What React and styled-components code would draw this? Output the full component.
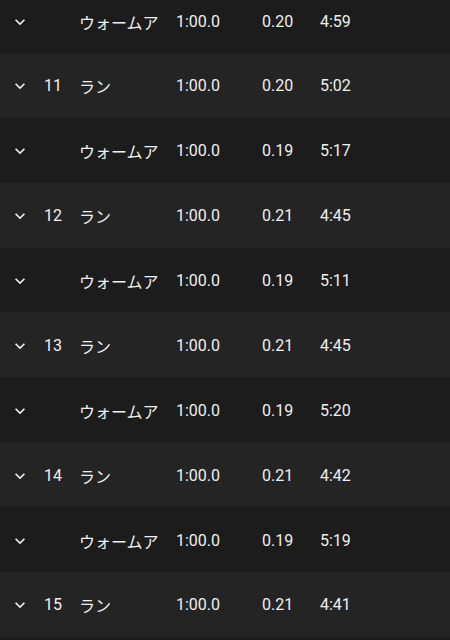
import React from "react";
import styled, { createGlobalStyle } from "styled-components";

const Global = createGlobalStyle`
  html, body { margin: 0; padding: 0; background: #1c1c1c; overflow: hidden; }
  body { font-family: Roboto, "Noto Sans CJK JP", sans-serif; }
`;

const List = styled.div`
  margin-top: -11.9px;
  display: flex;
  flex-direction: column;
`;

const Row = styled.div`
  box-sizing: border-box;
  height: 64.89px;
  display: grid;
  grid-template-columns: 20px 49px 97px 86px 58px 1fr;
  align-items: center;
  padding: 2px 0 0 10px;
  background: ${(p) => (p.$alt ? "#242424" : "#1c1c1c")};
  color: #efefef;
  font-size: 16px;
  line-height: 20px;
`;

const IconCell = styled.div`
  display: flex;
  align-items: center;
  width: 20px;
  height: 20px;
`;

const Num = styled.span`
  padding-left: 14px;
  font-family: Roboto, sans-serif;
`;

const Name = styled.span`
  font-family: "Noto Sans CJK JP", sans-serif;
`;

const Cell = styled.span`
  font-family: Roboto, sans-serif;
`;

const Chevron = () => (
  <svg width="20" height="20" viewBox="0 0 24 24" fill="#efefef">
    <path d="M7.41 8.59 12 13.17l4.59-4.58L18 10l-6 6-6-6 1.41-1.41z" />
  </svg>
);

const rows = [
  ["", "ウォームア", "1:00.0", "0.20", "4:59"],
  ["11", "ラン", "1:00.0", "0.20", "5:02"],
  ["", "ウォームア", "1:00.0", "0.19", "5:17"],
  ["12", "ラン", "1:00.0", "0.21", "4:45"],
  ["", "ウォームア", "1:00.0", "0.19", "5:11"],
  ["13", "ラン", "1:00.0", "0.21", "4:45"],
  ["", "ウォームア", "1:00.0", "0.19", "5:20"],
  ["14", "ラン", "1:00.0", "0.21", "4:42"],
  ["", "ウォームア", "1:00.0", "0.19", "5:19"],
  ["15", "ラン", "1:00.0", "0.21", "4:41"],
];

export default function App() {
  return (
    <>
      <Global />
      <List>
        {rows.map((r, i) => (
          <Row key={i} $alt={i % 2 === 1}>
            <IconCell>
              <Chevron />
            </IconCell>
            <Num>{r[0]}</Num>
            <Name>{r[1]}</Name>
            <Cell>{r[2]}</Cell>
            <Cell>{r[3]}</Cell>
            <Cell>{r[4]}</Cell>
          </Row>
        ))}
      </List>
    </>
  );
}
